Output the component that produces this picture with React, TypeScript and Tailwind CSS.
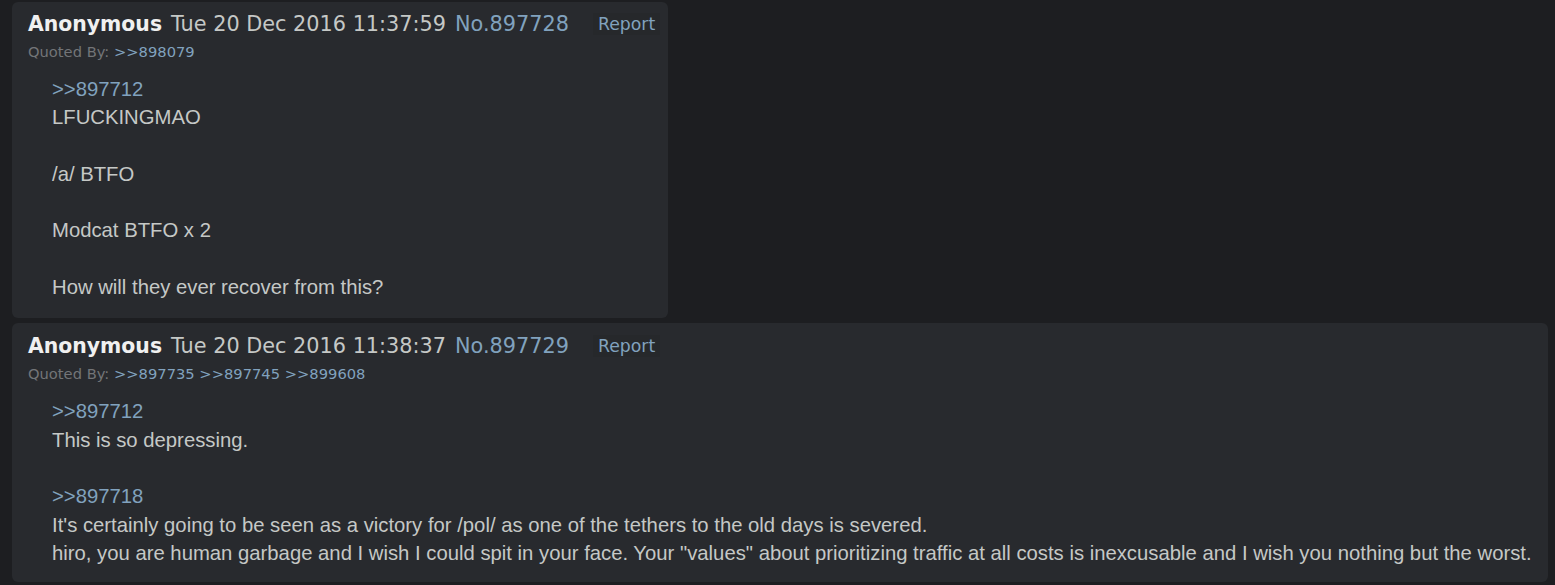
import React from "react";

const Q = ({ n }: { n: string }) => (
  <span className="text-[#81a2be]">&gt;&gt;{n}</span>
);

const HF = { fontFamily: "'DejaVu Sans', Verdana, sans-serif" };

function Header({ time, no, quoted }: { time: string; no: string; quoted: string[] }) {
  return (
    <div>
      <div className="flex items-center h-[24px] text-[20.8px] leading-[24px] text-[#c5c8c6]" style={HF}>
        <span className="font-bold text-[#f0f0f0] text-[20.4px]">Anonymous</span>
        <span className="ml-[9px]">Tue 20 Dec 2016 {time}</span>
        <span className="ml-[9px] text-[#81a2be]">No.{no}</span>
        <span className="ml-[24px] bg-[#26282b] px-[5px] text-[17.3px] leading-[22px] text-[#81a2be]">Report</span>
      </div>
      <div className="mt-[6px] text-[14.7px] leading-[20px] text-[#737578]" style={HF}>
        Quoted By:{" "}
        {quoted.map((q, i) => (
          <span key={q}>
            {i > 0 ? " " : ""}
            <Q n={q} />
          </span>
        ))}
      </div>
    </div>
  );
}

export default function App() {
  return (
    <div className="min-h-[585px] w-[1555px] bg-[#1d1e21] pt-[2px] pl-[12px] pr-[7px]" style={{ fontFamily: "'Liberation Sans', Arial, sans-serif" }}>
      <div className="w-[656px] rounded-[6px] bg-[#282a2e] pl-[16px] pt-[10px] pb-[17px]">
        <Header time="11:37:59" no="897728" quoted={["898079"]} />
        <div className="ml-[24px] mt-[13px] text-[20.3px] leading-[28.3px] text-[#c5c8c6]">
          <div><Q n="897712" /></div>
          <div>LFUCKINGMAO</div>
          <div>&nbsp;</div>
          <div>/a/ BTFO</div>
          <div>&nbsp;</div>
          <div>Modcat BTFO x 2</div>
          <div>&nbsp;</div>
          <div>How will they ever recover from this?</div>
        </div>
      </div>
      <div className="mt-[5px] w-[1536px] rounded-[6px] bg-[#282a2e] pl-[16px] pt-[11px] pb-[15px]">
        <Header time="11:38:37" no="897729" quoted={["897735", "897745", "899608"]} />
        <div className="ml-[24px] mt-[13px] text-[20.3px] leading-[28.3px] text-[#c5c8c6]">
          <div><Q n="897712" /></div>
          <div>This is so depressing.</div>
          <div>&nbsp;</div>
          <div><Q n="897718" /></div>
          <div>It's certainly going to be seen as a victory for /pol/ as one of the tethers to the old days is severed.</div>
          <div>hiro, you are human garbage and I wish I could spit in your face. Your "values" about prioritizing traffic at all costs is inexcusable and I wish you nothing but the worst.</div>
        </div>
      </div>
    </div>
  );
}
